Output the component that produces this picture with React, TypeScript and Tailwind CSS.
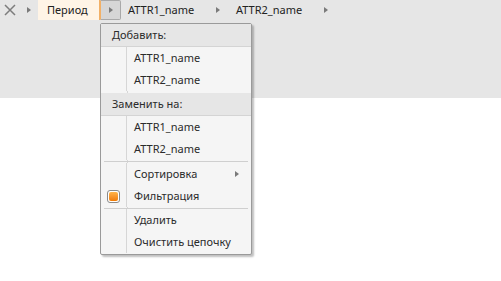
import { FC } from "react";

const Arrow: FC<{ className?: string }> = ({ className = "" }) => (
  <svg width="4" height="6" viewBox="0 0 4 6" className={className}>
    <path d="M0 0 L4 3 L0 6 Z" fill="#7a7a7a" />
  </svg>
);

const Item: FC<{ label: string; left?: React.ReactNode; right?: React.ReactNode }> = ({ label, left, right }) => (
  <div className="flex h-[22px] items-center">
    <div className="flex w-[26px] h-full items-center justify-center border-r border-[#d6d6d6]">{left}</div>
    <span className="pl-[7px] flex-1">{label}</span>
    {right && <div className="pr-[12px]">{right}</div>}
  </div>
);

const Header: FC<{ label: string }> = ({ label }) => (
  <div className="flex h-[23px] items-center bg-[#e6e6e6] border-b border-[#d4d4d4] pl-[11px]">{label}</div>
);

const Sep: FC<{ h: string }> = ({ h }) => (
  <div className={`relative ${h}`}>
    <div className="absolute left-[26px] top-0 bottom-0 border-l border-[#d6d6d6]" />
    <div className="absolute left-[3px] right-[3px] top-[1px] border-t border-[#cfcfcf]" />
  </div>
);

const App: FC = () => {
  return (
    <div className="relative w-[501px] h-[281px] bg-white text-[11px] text-[#2b2b2b]" style={{ fontFamily: '"Noto Sans", "Open Sans", sans-serif' }}>
      <div className="h-[98px] bg-[#e6e6e6]">
        <div className="flex h-[20px] items-center">
          <svg width="12" height="12" viewBox="0 0 12 12" className="ml-[4px]">
            <path d="M1 1 L11 11 M11 1 L1 11" stroke="#7d7d7d" strokeWidth="1.5" />
          </svg>
          <Arrow className="ml-[11px]" />
          <div className="ml-[7px] flex h-[20px] w-[62px] items-center bg-[#fff4e6] border-r border-[#f2b066] pl-[9px] text-[#222]">Период</div>
          <div className="flex h-[20px] w-[21px] items-center justify-center bg-[#d6d6d6] border border-[#a9a9a9] border-l-[#f2b066] rounded-r-[2px]">
            <Arrow />
          </div>
          <span className="ml-[7px] w-[68px] text-[#222]">ATTR1_name</span>
          <Arrow className="ml-[20px]" />
          <span className="ml-[16px] w-[68px] text-[#222]">ATTR2_name</span>
          <Arrow className="ml-[20px]" />
        </div>
      </div>

      <div className="absolute left-[100px] top-[23px] w-[152px] bg-[#f5f5f5] border border-[#9a9a9a] rounded-[2px] shadow-[2px_2px_2px_rgba(0,0,0,0.25)] pb-[1px]">
        <Header label="Добавить:" />
        <Item label="ATTR1_name" />
        <Item label="ATTR2_name" />
        <div className="h-[2px] relative"><div className="absolute left-[26px] top-0 bottom-0 border-l border-[#d6d6d6]" /></div>
        <Header label="Заменить на:" />
        <Item label="ATTR1_name" />
        <Item label="ATTR2_name" />
        <Sep h="h-[3px]" />
        <Item label="Сортировка" right={<Arrow />} />
        <Item
          label="Фильтрация"
          left={
            <div className="flex h-[13px] w-[13px] items-center justify-center rounded-[3px] border border-[#8a8a8a] bg-white">
              <div className="h-[9px] w-[9px] rounded-[2px] bg-gradient-to-b from-[#ffb347] to-[#f07a00]" />
            </div>
          }
        />
        <Sep h="h-[2px]" />
        <Item label="Удалить" />
        <Item label="Очистить цепочку" />
      </div>
    </div>
  );
};

export default App;
